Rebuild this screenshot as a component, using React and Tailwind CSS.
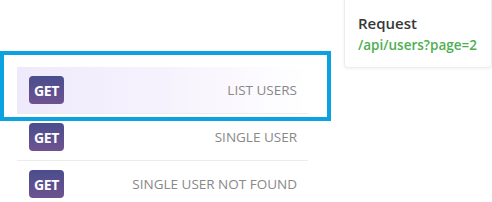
import React from 'react';

const endpoints = [
  { method: 'GET', label: 'LIST USERS', active: true },
  { method: 'GET', label: 'SINGLE USER' },
  { method: 'GET', label: 'SINGLE USER NOT FOUND' },
];

export default function App() {
  return (
    <div
      className="relative w-[492px] h-[202px] overflow-hidden bg-white flex"
      style={{ fontFamily: '"Open Sans", "Noto Sans", sans-serif' }}
    >
      {/* endpoint list */}
      <div className="w-[344px] shrink-0 pl-[17px] pr-[36px] pt-[67px]">
        <ul className="flex flex-col">
          {endpoints.map((ep) => (
            <li
              key={ep.label}
              className={`flex items-center justify-between h-[47px] pl-[12px] pr-[11px] border-b border-[#ececec] ${
                ep.active ? 'bg-gradient-to-r from-[#efeafb] via-[#f6f2fd] to-white' : ''
              }`}
            >
              <span className="w-[35px] h-[28px] rounded-[4px] bg-gradient-to-b from-[#494d8d] to-[#6e5290] text-white text-[14px] font-bold flex items-center justify-center tracking-[-0.3px]">
                {ep.method}
              </span>
              <span className="text-[13.5px] text-[#888]">{ep.label}</span>
            </li>
          ))}
        </ul>
      </div>

      {/* request card */}
      <div className="flex-1 -mt-[10px]">
        <div className="h-[78px] bg-white border border-[#ededed] rounded-[4px] shadow-[0_1px_3px_rgba(0,0,0,0.06)] pl-[13px] pt-[22px]">
          <div className="text-[15px] font-semibold text-[#383838] leading-[20px]">Request</div>
          <div className="text-[13.5px] font-semibold text-[#4caf50] leading-[20px] mt-[2px]">/api/users?page=2</div>
        </div>
      </div>

      {/* highlight frame */}
      <div className="absolute left-0 top-[51px] w-[331px] h-[70px] border-[4px] border-[#0aa3e0] pointer-events-none" />
    </div>
  );
}
